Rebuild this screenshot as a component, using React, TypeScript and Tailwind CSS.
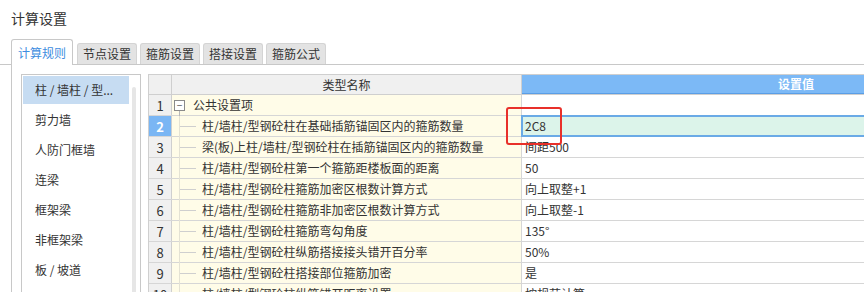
const tabs = ["节点设置", "箍筋设置", "搭接设置", "箍筋公式"];

const categories = ["柱 / 墙柱 / 型...", "剪力墙", "人防门框墙", "连梁", "框架梁", "非框架梁", "板 / 坡道"];

const rows = [
  { id: 1, name: "公共设置项", value: "", group: true },
  { id: 2, name: "柱/墙柱/型钢砼柱在基础插筋锚固区内的箍筋数量", value: "2C8" },
  { id: 3, name: "梁(板)上柱/墙柱/型钢砼柱在插筋锚固区内的箍筋数量", value: "间距500" },
  { id: 4, name: "柱/墙柱/型钢砼柱第一个箍筋距楼板面的距离", value: "50" },
  { id: 5, name: "柱/墙柱/型钢砼柱箍筋加密区根数计算方式", value: "向上取整+1" },
  { id: 6, name: "柱/墙柱/型钢砼柱箍筋非加密区根数计算方式", value: "向上取整-1" },
  { id: 7, name: "柱/墙柱/型钢砼柱箍筋弯勾角度", value: "135°" },
  { id: 8, name: "柱/墙柱/型钢砼柱纵筋搭接接头错开百分率", value: "50%" },
  { id: 9, name: "柱/墙柱/型钢砼柱搭接部位箍筋加密", value: "是" },
  { id: 10, name: "柱/墙柱/型钢砼柱纵筋错开距离设置", value: "按规范计算" },
];

const App = () => {
  return (
    <div className="relative w-[864px] h-[292px] overflow-hidden bg-white text-[#333] font-['Noto_Sans_CJK_SC','Liberation_Sans',sans-serif]">
      {/* title */}
      <div className="h-[39px] pl-[11px] pt-[8px] text-[14px] leading-[20px]">计算设置</div>

      {/* tab strip */}
      <div className="flex items-end h-[26px] pl-[11px] border-b border-[#c8c8c8]">
        <div className="-mb-px h-[26px] w-[62px] flex items-center justify-center bg-white border border-b-0 border-[#c8c8c8] rounded-t-[3px] text-[12px] text-[#3d8de0]">
          计算规则
        </div>
        {tabs.map((t, i) => (
          <div
            key={t}
            className={`h-[21px] w-[60px] flex items-center justify-center bg-[#e3e3e3] border border-b-0 border-[#d4d4d4] rounded-t-[3px] text-[12px] ${i === 0 ? "ml-[4px]" : "ml-[3px]"}`}
          >
            {t}
          </div>
        ))}
      </div>

      {/* body */}
      <div className="ml-[11px] h-[300px] border-l border-[#c8c8c8] pl-[9px] pt-[9px] flex gap-[7px]">
        {/* category list */}
        <div className="relative w-[120px] h-[260px] shrink-0 border border-[#c8c8c8] p-px">
          <div className="flex flex-col gap-[2px]">
            {categories.map((c, i) => (
              <div
                key={c}
                className={`h-[28px] w-[106px] pl-[12px] flex items-center text-[12px] whitespace-nowrap ${i === 0 ? "bg-[#c6dcf2]" : ""}`}
              >
                {c}
              </div>
            ))}
          </div>
          <div className="absolute left-[110px] top-[12px] w-[4px] h-[240px] rounded-full bg-[#e6e6e6]" />
        </div>

        {/* grid */}
        <div className="flex-1 min-w-0 overflow-hidden border-l border-t border-[#cfcfcf] text-[12px]">
          <div className="flex h-[20px] border-b border-[#cfcfcf]">
            <div className="w-[23px] shrink-0 bg-[#f0f0f0] border-r border-[#cfcfcf]" />
            <div className="w-[350px] shrink-0 bg-[#f0f0f0] border-r border-[#cfcfcf] flex items-center justify-center leading-none">
              类型名称
            </div>
            <div className="w-[548px] shrink-0 bg-[#7cb9f6] border-b border-[#5a9ee6] flex items-center justify-center text-white font-bold leading-none">
              设置值
            </div>
          </div>

          {rows.map((r) => {
            const active = r.id === 2;
            return (
              <div key={r.id} className="flex h-[21px] border-b border-[#d6d6d6]">
                <div
                  className={`w-[23px] shrink-0 border-r border-[#cfcfcf] flex items-center justify-center text-[13px] leading-none ${active ? "bg-[#7ab6f4] text-white font-bold" : "bg-[#f0f0f0]"}`}
                >
                  {r.id}
                </div>
                <div className="relative w-[350px] shrink-0 bg-[#fffce8] border-r border-[#d6d6d6] flex items-center leading-none whitespace-nowrap">
                  {r.group ? (
                    <>
                      <span className="ml-[2px] w-[11px] h-[11px] border border-[#8a8a8a] bg-white flex items-center justify-center text-[10px] leading-none text-[#555]">
                        −
                      </span>
                      <span className="ml-[8px]">{r.name}</span>
                      <span className="absolute left-[7px] top-[16px] h-[5px] w-px bg-[#b8b8b8]" />
                    </>
                  ) : (
                    <>
                      <span className="absolute left-[7px] top-0 h-[21px] w-px bg-[#e4e2d4]" />
                      <span className="ml-[8px] w-[16px] h-px bg-[#cfcfcf]" />
                      <span className="ml-[6px]">{r.name}</span>
                    </>
                  )}
                </div>
                <div
                  className={`relative w-[548px] shrink-0 flex items-center pl-[3px] leading-none ${active ? "bg-[#dcf4ea]" : "bg-white"}`}
                >
                  {r.value}
                  {active && (
                    <span className="absolute -left-px -top-px -bottom-px right-0 border-2 border-[#6aaae6]" />
                  )}
                </div>
              </div>
            );
          })}
        </div>
      </div>

      {/* red annotation */}
      <div className="absolute left-[506px] top-[107px] w-[56px] h-[38px] border-2 border-[#e8302a] rounded-[3px]" />
    </div>
  );
};

export default App;
